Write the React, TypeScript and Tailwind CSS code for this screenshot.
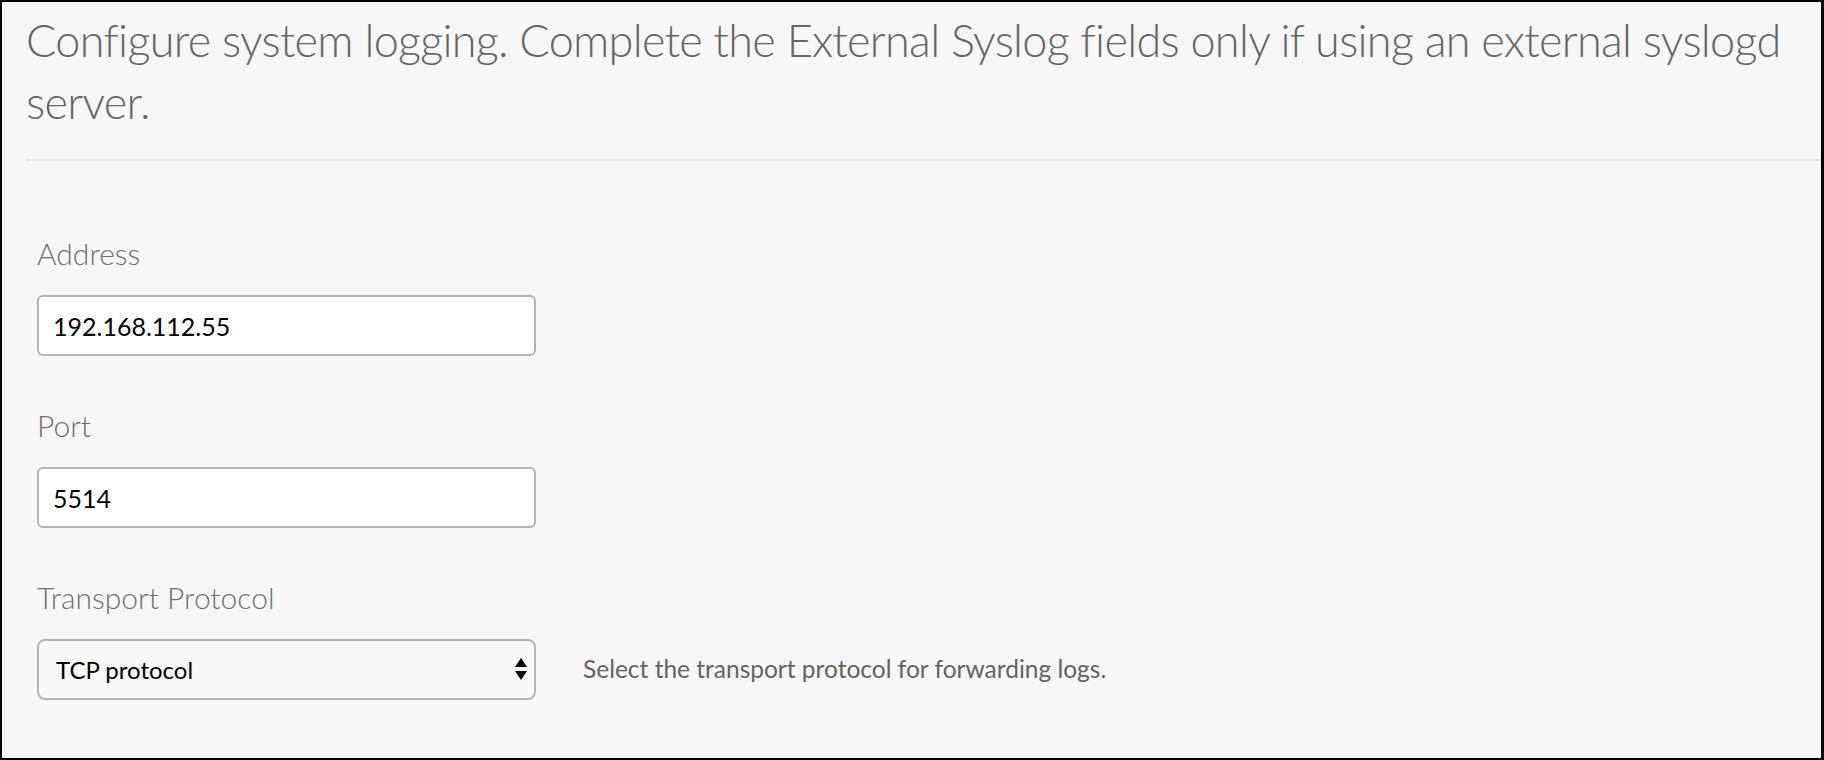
import { useState } from "react";

// syslog settings form
function Field({ label, children }: { label: string; children: React.ReactNode }) {
  return (
    <div className="flex flex-col">
      <label className="text-[30px] font-light leading-[36px] text-[#707070] mb-6">{label}</label>
      {children}
    </div>
  );
}

export default function App() {
  const [address, setAddress] = useState("192.168.112.55");
  const [port, setPort] = useState("5514");
  const [proto, setProto] = useState("tcp");

  return (
    <div className="w-[1824px] h-[760px] overflow-hidden bg-[#f7f7f7] border-t-2 border-l-2 border-b-2 border-r-[3px] border-black font-['Lato',sans-serif]">
      {/* HEADER */}
      <div className="pl-6 pt-[7px]">
        <h1 className="text-[45px] font-light leading-[62px] tracking-[-0.7px] text-[#666]">
          Configure system logging. Complete the External Syslog fields only if using an external syslogd server.
        </h1>
      </div>
      <div className="ml-6 mt-[26px] h-[2px] bg-[#e3e3e3]" />

      {/* FORM */}
      <div className="pl-[35px] pt-[74px] flex flex-col gap-[51px]">
        <Field label="Address">
          <input
            value={address}
            onChange={(e) => setAddress(e.target.value)}
            className="w-[499px] h-[61px] bg-white border-2 border-[#b4b4b4] rounded-md px-[14px] text-[25px] text-black focus:outline-none"
          />
        </Field>
        <Field label="Port">
          <input
            value={port}
            onChange={(e) => setPort(e.target.value)}
            className="w-[499px] h-[61px] bg-white border-2 border-[#b4b4b4] rounded-md px-[14px] text-[25px] text-black focus:outline-none"
          />
        </Field>
        <Field label="Transport Protocol">
          <div className="flex items-center gap-[47px]">
            <div className="relative w-[499px]">
              <select
                value={proto}
                onChange={(e) => setProto(e.target.value)}
                className="appearance-none w-full h-[61px] bg-[#f8f8f8] border-2 border-[#b4b4b4] rounded-lg pl-[17px] pr-10 text-[24px] text-black focus:outline-none"
              >
                <option value="tcp">TCP protocol</option>
                <option value="udp">UDP protocol</option>
              </select>
              <svg className="absolute right-[9px] top-[19px] pointer-events-none" width="12" height="22" viewBox="0 0 12 22">
                <path d="M6 0 L12 9 L0 9 Z" fill="#000" />
                <path d="M0 13 L12 13 L6 22 Z" fill="#000" />
              </svg>
            </div>
            <span className="text-[24.5px] text-[#636363]">Select the transport protocol for forwarding logs.</span>
          </div>
        </Field>
      </div>
    </div>
  );
}
